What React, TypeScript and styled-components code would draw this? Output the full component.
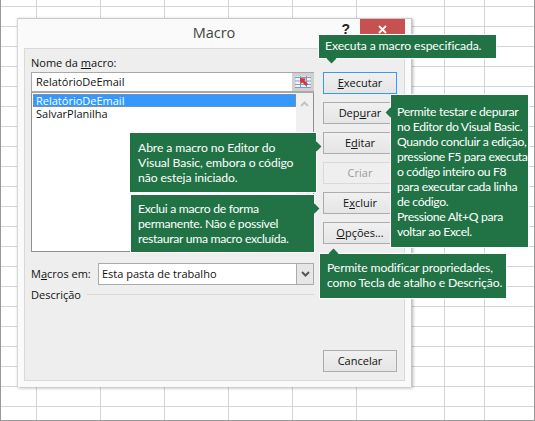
import { createGlobalStyle, styled } from "styled-components";

const GlobalStyle = createGlobalStyle`
  html, body {
    margin: 0;
    padding: 0;
    background: #fff;
  }
  body {
    font-family: "Open Sans", "Noto Sans", sans-serif;
  }
`;

const columnLines = [36, 100, 164, 228, 292, 356, 444, 484];

const Sheet = styled.div`
  position: relative;
  width: 535px;
  height: 421px;
  box-sizing: border-box;
  padding: 18px 0 0 16px;
  border-left: 1px solid #9a9a9a;
  border-bottom: 1px solid #9a9a9a;
  border-right: 1px solid #9a9a9a;
  overflow: hidden;
  background-color: #fff;
  background-image: linear-gradient(#d4d4d4 1px, transparent 1px);
  background-size: 100% 20px;
  background-position: 0 6px;
`;

const ColumnLine = styled.div<{ $x: number }>`
  position: absolute;
  top: 0;
  bottom: 0;
  left: ${(p) => p.$x - 1}px;
  width: 1px;
  background: #d4d4d4;
`;

const Dialog = styled.div`
  position: relative;
  width: 395px;
  height: 369px;
  box-sizing: border-box;
  padding: 0 6px 6px 6px;
  background: #fafafa;
  border-top: 1px solid #c8c8c8;
  border-right: 1px solid #c8c8c8;
  border-left: 1px solid #d8d8d8;
  box-shadow: 1px 1px 3px rgba(0, 0, 0, 0.3);
  display: flex;
  flex-direction: column;
`;

const TitleBar = styled.div`
  height: 29px;
  flex: none;
  position: relative;
  display: flex;
  align-items: center;
  justify-content: center;
`;

const Title = styled.div`
  font-size: 14.5px;
  color: #444;
  margin: -2px 0 0 -1px;
`;

const Help = styled.div`
  position: absolute;
  right: 55px;
  top: 0;
  font-family: "Liberation Sans", sans-serif;
  font-weight: 700;
  font-size: 14px;
  line-height: 20px;
  color: #222;
`;

const CloseButton = styled.div`
  position: absolute;
  right: 0;
  top: 0;
  width: 45px;
  height: 20px;
  background: #c75050;
  display: flex;
  align-items: flex-start;
  justify-content: center;
  padding-top: 6px;
  box-sizing: border-box;
`;

const Panel = styled.div`
  flex: 1;
  display: flex;
  justify-content: space-between;
  box-sizing: border-box;
  background: #eeeeee;
  border: 1px solid #d9d9d9;
  padding: 0 7px 8px 6px;
  font-size: 11px;
  color: #111;
`;

const LeftColumn = styled.div`
  width: 283px;
  display: flex;
  flex-direction: column;
`;

const FieldLabel = styled.div`
  height: 23px;
  line-height: 28px;
  white-space: nowrap;
`;

const Key = styled.span`
  text-decoration: underline;
  text-underline-offset: 1px;
`;

const NameInput = styled.div`
  height: 21px;
  box-sizing: border-box;
  border: 1px solid #a8a8a8;
  border-right: 0;
  border-bottom-width: 2px;
  background: #fff;
  display: flex;
  align-items: center;
  justify-content: space-between;
  padding-left: 4px;
  line-height: 22px;
`;

const RefEdit = styled.div`
  width: 22px;
  height: 18px;
  background: #d0d0d0;
  display: flex;
  align-items: center;
  justify-content: center;
`;

const MacroList = styled.div`
  height: 159px;
  box-sizing: border-box;
  border: 1px solid #8f8f96;
  border-top: 0;
  background: #fff;
  display: flex;
  justify-content: space-between;
`;

const Items = styled.div`
  flex: 1;
  padding: 1px 0 0 1px;
`;

const Item = styled.div<{ $selected?: boolean }>`
  height: 13px;
  line-height: 13px;
  padding-left: 3px;
  background: ${(p) => (p.$selected ? "#3399ff" : "transparent")};
  color: ${(p) => (p.$selected ? "#fff" : "#111")};
  outline: ${(p) => (p.$selected ? "1px dotted #b98a5a" : "none")};
  outline-offset: -1px;
`;

const Scrollbar = styled.div`
  width: 17px;
  background: #f0f0f0;
  display: flex;
  justify-content: center;
  padding-top: 8px;
  box-sizing: border-box;
`;

const MacrosRow = styled.div`
  display: flex;
  align-items: center;
  justify-content: space-between;
  margin-top: 11px;
  height: 22px;
`;

const MacrosLabel = styled.span`
  margin-top: -1px;
`;

const Select = styled.div`
  width: 216px;
  height: 22px;
  box-sizing: border-box;
  border: 1px solid #ababab;
  background: #fff;
  display: flex;
  align-items: center;
  justify-content: space-between;
  padding-left: 3px;
  line-height: 18px;
`;

const SelectText = styled.span`
  margin-top: -1px;
`;

const SelectArrow = styled.div`
  width: 16px;
  height: 20px;
  background: #e6e6e6;
  border-left: 1px solid #ababab;
  display: flex;
  align-items: center;
  justify-content: center;
`;

const DescriptionRow = styled.div`
  display: flex;
  align-items: center;
  gap: 6px;
  height: 20px;
  margin-top: -1px;
`;

const Rule = styled.div`
  flex: 1;
  height: 1px;
  background: #d8d8d8;
`;

const RightColumn = styled.div`
  width: 74px;
  display: flex;
  flex-direction: column;
  padding-top: 23px;
  gap: 8px;
`;

const Button = styled.div<{ $focused?: boolean; $disabled?: boolean; $pushDown?: boolean }>`
  height: 22px;
  box-sizing: border-box;
  padding-bottom: 1px;
  border: 1px solid ${(p) => (p.$focused ? "#3399ff" : p.$disabled ? "#d9d9d9" : "#acacac")};
  background: ${(p) => (p.$disabled ? "#efefef" : "linear-gradient(#f0f0f0, #e5e5e5)")};
  color: ${(p) => (p.$disabled ? "#9a9a9a" : "#111")};
  display: flex;
  align-items: center;
  justify-content: center;
  margin-top: ${(p) => (p.$pushDown ? "auto" : "0")};
`;

const Tip = styled.div<{ $x: number; $y: number; $w: number; $h: number; $pt: number; $pl: number; $ls: number }>`
  position: absolute;
  left: ${(p) => p.$x}px;
  top: ${(p) => p.$y}px;
  width: ${(p) => p.$w}px;
  height: ${(p) => p.$h}px;
  box-sizing: border-box;
  background: #217346;
  border: 1px solid #fff;
  color: #fff;
  font-family: "Lato", "Open Sans", sans-serif;
  font-size: 12.2px;
  letter-spacing: ${(p) => p.$ls}px;
  line-height: 15px;
  padding: ${(p) => p.$pt}px 0 0 ${(p) => p.$pl}px;
  white-space: nowrap;
  z-index: 2;
`;

const Notch = styled.div<{ $side: "top" | "bottom" | "left" | "right"; $at: number }>`
  position: absolute;
  width: 7px;
  height: 7px;
  background: #217346;
  transform: rotate(45deg);
  ${(p) => (p.$side === "top" || p.$side === "bottom" ? `left: ${p.$at}px;` : `top: ${p.$at}px;`)}
  ${(p) => `${p.$side}: -4px;`}
`;

const tips = [
  { x: 317, y: 34, w: 179, h: 25, pt: 3, pl: 6, ls: -0.1, side: "bottom", at: 9, lines: ["Executa a macro especificada."] },
  {
    x: 389, y: 94, w: 139, h: 154, pt: 9, pl: 6, ls: -0.35, side: "left", at: 14,
    lines: [
      "Permite testar e depurar",
      "no Editor do Visual Basic.",
      "Quando concluir a edição,",
      "pressione F5 para executar",
      "o código inteiro ou F8",
      "para executar cada linha",
      "de código.",
      "Pressione Alt+Q para",
      "voltar ao Excel.",
    ],
  },
  {
    x: 128, y: 132, w: 188, h: 61, pt: 7, pl: 8, ls: -0.1, side: "right", at: 10,
    lines: ["Abre a macro no Editor do", "Visual Basic, embora o código", "não esteja iniciado."],
  },
  {
    x: 129, y: 194, w: 185, h: 59, pt: 6, pl: 7, ls: -0.3, side: "right", at: 10,
    lines: ["Exclui a macro de forma", "permanente. Não é possível", "restaurar uma macro excluída."],
  },
  {
    x: 318, y: 253, w: 188, h: 46, pt: 6, pl: 7, ls: -0.15, side: "top", at: 10,
    lines: ["Permite modificar propriedades,", "como Tecla de atalho e Descrição."],
  },
] as const;

export default function App() {
  return (
    <>
      <GlobalStyle />
      <Sheet>
        {columnLines.map((x) => (
          <ColumnLine key={x} $x={x} />
        ))}
        <Dialog>
          <TitleBar>
            <Title>Macro</Title>
            <Help>?</Help>
            <CloseButton>
              <svg width="9" height="9" viewBox="0 0 9 9">
                <path d="M1 1 L8 8 M8 1 L1 8" stroke="#fff" strokeWidth="1.8" />
              </svg>
            </CloseButton>
          </TitleBar>
          <Panel>
            <LeftColumn>
              <FieldLabel>
                Nome da <Key>m</Key>acro:
              </FieldLabel>
              <NameInput>
                RelatórioDeEmail
                <RefEdit>
                  <svg width="16" height="14" viewBox="0 0 16 14">
                    <rect x="0.5" y="1.5" width="15" height="11" fill="#eef3f9" />
                    <path d="M0 2.5 H16 M0 6 H16 M0 9.5 H16 M0 12.5 H16 M5.5 1 V13 M11.5 1 V13" stroke="#7f9cc4" />
                    <path d="M5 3 L11 3.5 L9.5 5.5 L13 9 L11 11 L7.5 7.5 L5.5 9 Z" fill="#d8323a" />
                  </svg>
                </RefEdit>
              </NameInput>
              <MacroList>
                <Items>
                  <Item $selected>RelatórioDeEmail</Item>
                  <Item>SalvarPlanilha</Item>
                </Items>
                <Scrollbar>
                  <svg width="9" height="6" viewBox="0 0 9 6">
                    <path d="M1 5 L4.5 1.5 L8 5" fill="none" stroke="#c4c4c4" strokeWidth="2" />
                  </svg>
                </Scrollbar>
              </MacroList>
              <MacrosRow>
                <MacrosLabel>
                  M<Key>a</Key>cros em:
                </MacrosLabel>
                <Select>
                  <SelectText>Esta pasta de trabalho</SelectText>
                  <SelectArrow>
                    <svg width="9" height="6" viewBox="0 0 9 6">
                      <path d="M1 1 L4.5 4.5 L8 1" fill="none" stroke="#555" strokeWidth="2" />
                    </svg>
                  </SelectArrow>
                </Select>
              </MacrosRow>
              <DescriptionRow>
                Descrição
                <Rule />
              </DescriptionRow>
            </LeftColumn>
            <RightColumn>
              <Button $focused>
                <span>
                  <Key>E</Key>xecutar
                </span>
              </Button>
              <Button>
                <span>
                  Dep<Key>u</Key>rar
                </span>
              </Button>
              <Button>
                <span>
                  E<Key>d</Key>itar
                </span>
              </Button>
              <Button $disabled>Criar</Button>
              <Button>
                <span>
                  E<Key>x</Key>cluir
                </span>
              </Button>
              <Button>
                <span>
                  <Key>O</Key>pções...
                </span>
              </Button>
              <Button $pushDown>Cancelar</Button>
            </RightColumn>
          </Panel>
        </Dialog>
        {tips.map((t) => (
          <Tip key={t.lines[0]} $x={t.x} $y={t.y} $w={t.w} $h={t.h} $pt={t.pt} $pl={t.pl} $ls={t.ls}>
            <Notch $side={t.side} $at={t.at} />
            {t.lines.map((line) => (
              <div key={line}>{line}</div>
            ))}
          </Tip>
        ))}
      </Sheet>
    </>
  );
}
